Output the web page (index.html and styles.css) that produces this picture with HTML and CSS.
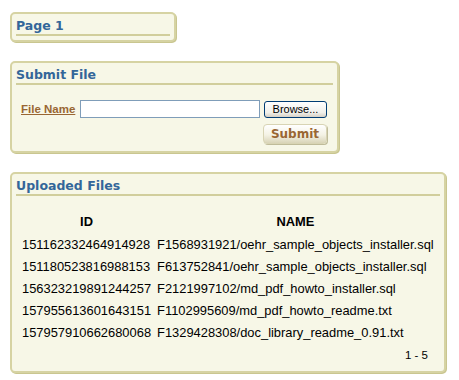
FILE: index.html
```html
<!DOCTYPE html>
<html>
<head>
  <title>Page 1</title>
  <link rel="stylesheet" href="styles.css">
</head>
<body>
  <div class="region region-page">
    <h2 class="region-title">Page 1</h2>
  </div>

  <div class="region region-submit">
    <h2 class="region-title">Submit File</h2>
    <form class="upload-form">
      <div class="field">
        <label class="field-label" for="fileName">File Name</label>
        <input type="text" id="fileName" class="file-input">
        <button type="button" class="browse-btn">Browse...</button>
      </div>
      <div class="actions">
        <button type="button" class="submit-btn">Submit</button>
      </div>
    </form>
  </div>

  <div class="region region-files">
    <h2 class="region-title">Uploaded Files</h2>
    <table class="files">
      <thead>
        <tr>
          <th>ID</th>
          <th>NAME</th>
        </tr>
      </thead>
      <tbody>
        <tr>
          <td>151162332464914928</td>
          <td>F1568931921/oehr_sample_objects_installer.sql</td>
        </tr>
        <tr>
          <td>151180523816988153</td>
          <td>F613752841/oehr_sample_objects_installer.sql</td>
        </tr>
        <tr>
          <td>156323219891244257</td>
          <td>F2121997102/md_pdf_howto_installer.sql</td>
        </tr>
        <tr>
          <td>157955613601643151</td>
          <td>F1102995609/md_pdf_howto_readme.txt</td>
        </tr>
        <tr>
          <td>157957910662680068</td>
          <td>F1329428308/doc_library_readme_0.91.txt</td>
        </tr>
      </tbody>
    </table>
    <div class="pagination">1 - 5</div>
  </div>
</body>
</html>
```

FILE: styles.css
```css
body {
  margin: 0;
  padding: 12px 0 0 10px;
  background-color: #fff;
  font-family: "Liberation Sans", Arial, sans-serif;
  font-size: 12px;
  color: #000;
}

.region {
  box-sizing: border-box;
  background-color: #f7f7e7;
  border: 2px solid #d6d3a3;
  border-radius: 5px;
  box-shadow: 1px 1px 0 #c9c690;
  padding: 4px 4px 6px 4px;
  margin-bottom: 19px;
}

.region-page {
  width: 166px;
  height: 30px;
}

.region-submit {
  width: 329px;
  height: 92px;
}

.region-files {
  width: 436px;
  height: 201px;
}

.region-title {
  margin: 0;
  padding: 0 0 1px 0;
  font-family: "DejaVu Sans", Verdana, sans-serif;
  font-size: 12.5px;
  font-weight: bold;
  line-height: 15px;
  color: #336699;
  border-bottom: 2px solid #d1ce9c;
}

.upload-form {
  padding: 15px 0 0 5px;
}

.field {
  display: flex;
  align-items: center;
  height: 18px;
}

.field-label {
  font-family: "Liberation Sans", Arial, sans-serif;
  font-size: 11.5px;
  font-weight: bold;
  color: #996633;
  text-decoration: underline;
  white-space: nowrap;
  width: 59px;
}

.file-input {
  box-sizing: border-box;
  width: 180px;
  height: 18px;
  margin: 0;
  border: 1px solid #7f9db9;
  background: #fff;
  padding: 0 2px;
}

.browse-btn {
  box-sizing: border-box;
  width: 63px;
  height: 17px;
  margin: 0 0 0 4px;
  padding: 0;
  border: 1px solid #003c74;
  border-radius: 3px;
  background: linear-gradient(#ffffff, #f0f0ea 70%, #d6d0c5);
  font-family: "Liberation Sans", Arial, sans-serif;
  font-size: 11px;
  color: #000;
}

.actions {
  display: flex;
  justify-content: flex-end;
  padding: 6px 6px 0 0;
}

.submit-btn {
  box-sizing: border-box;
  width: 64px;
  height: 20px;
  margin: 0;
  padding: 0;
  border: 1px solid #d8d4b4;
  border-radius: 4px;
  background: linear-gradient(#ffffff, #f4f2e4 55%, #d9d4b8);
  box-shadow: 1px 1px 0 #bfbb99;
  font-family: "DejaVu Sans", Verdana, sans-serif;
  font-size: 12px;
  font-weight: bold;
  color: #996633;
}

.files {
  border-collapse: collapse;
  margin: 14px 0 0 3px;
  font-size: 12.9px;
}

.files th {
  font-weight: bold;
  padding: 4px 3px 5px 3px;
  line-height: 15px;
}

.files td {
  padding: 3px 3px 4px 3px;
  line-height: 15px;
  white-space: nowrap;
}

.pagination {
  text-align: right;
  padding: 5px 12px 0 0;
  font-size: 11.5px;
}
```
